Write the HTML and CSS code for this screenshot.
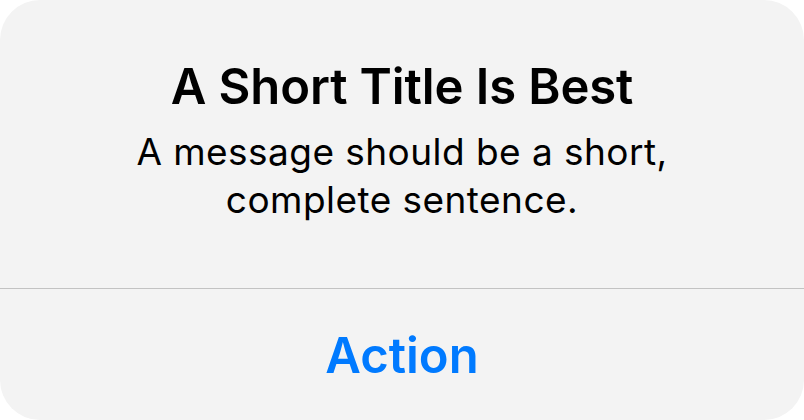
FILE: index.html
```html
<!DOCTYPE html>
<html>
<head>
<meta charset="utf-8">
<link rel="stylesheet" href="styles.css">
</head>
<body>
<div class="alert">
  <div class="alert-content">
    <h1 class="alert-title">A Short Title Is Best</h1>
    <p class="alert-message">A message should be a short,<br>complete sentence.</p>
  </div>
  <div class="alert-actions">
    <button class="alert-action">Action</button>
  </div>
</div>
</body>
</html>
```
FILE: styles.css
```css
html, body {
  margin: 0;
  padding: 0;
  background: #ffffff;
}
body {
  width: 804px;
  height: 420px;
  font-family: Inter, "Noto Sans", sans-serif;
}
.alert {
  width: 804px;
  height: 420px;
  background: #f3f3f3;
  border-radius: 40px;
  overflow: hidden;
  display: flex;
  flex-direction: column;
}
.alert-content {
  height: 289px;
  box-sizing: border-box;
  border-bottom: 1px solid #c2c2c2;
  display: flex;
  flex-direction: column;
  align-items: center;
  padding-top: 59px;
}
.alert-title {
  margin: 0;
  font-size: 49px;
  font-weight: 600;
  line-height: 56px;
  color: #000;
  letter-spacing: -0.1px;
}
.alert-message {
  margin: 13px 0 0;
  font-size: 37px;
  font-weight: 400;
  line-height: 48px;
  letter-spacing: 0.45px;
  color: #000;
  text-align: center;
}
.alert-actions {
  flex: 1;
  display: flex;
  align-items: flex-start;
  justify-content: center;
  padding-top: 38px;
}
.alert-action {
  border: 0;
  background: none;
  padding: 0;
  font-family: inherit;
  font-size: 49px;
  line-height: 58px;
  font-weight: 600;
  color: #007aff;
}
```
